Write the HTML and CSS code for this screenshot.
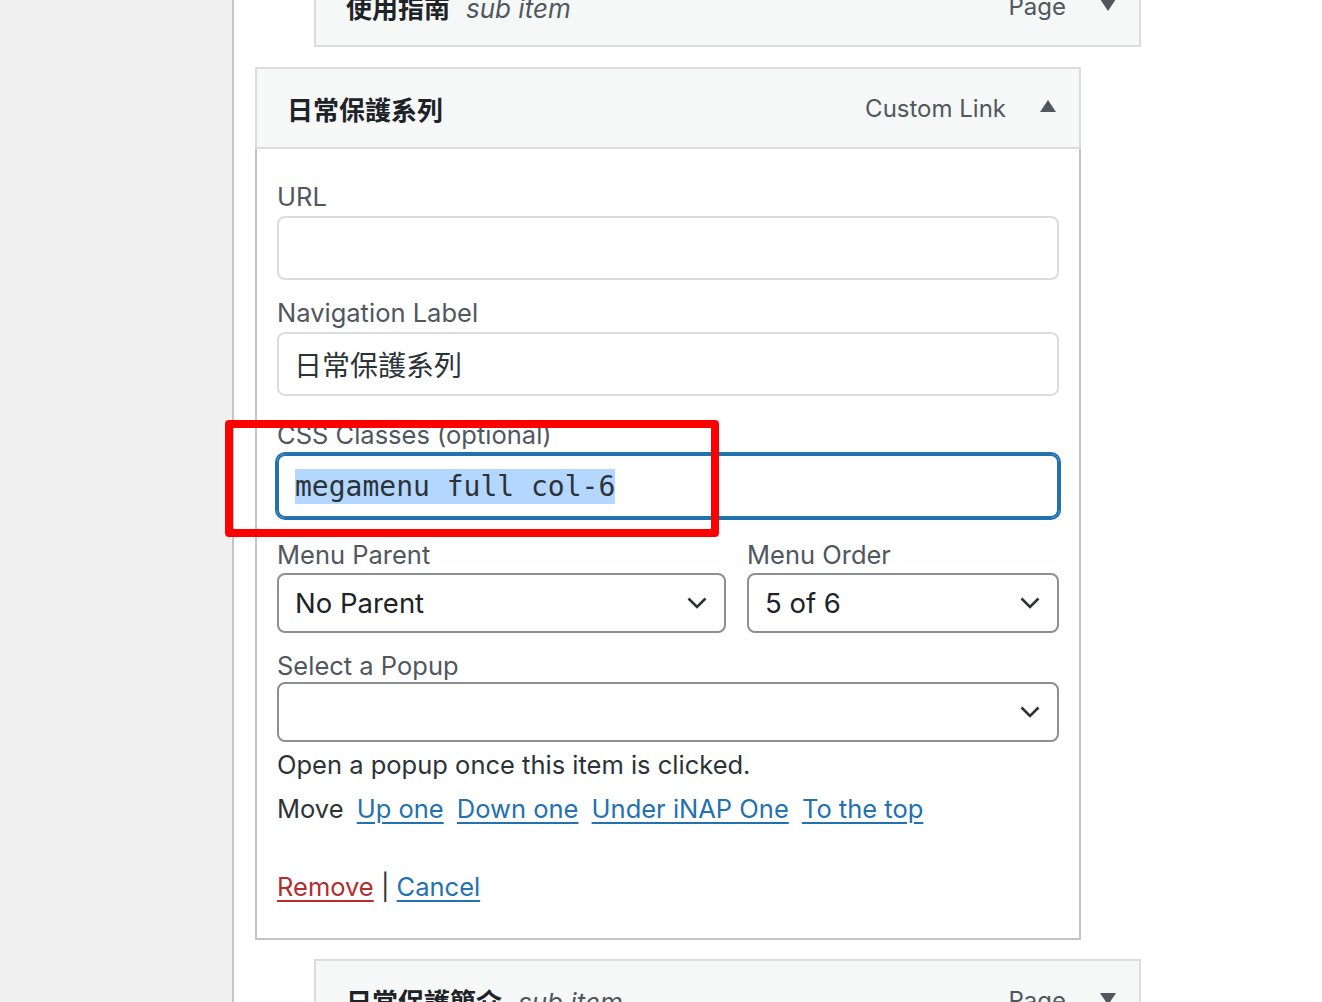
FILE: index.html
```html
<!DOCTYPE html>
<html>
    <head>
        <meta charset="utf-8">
        <title>Menus</title>
        <link rel="stylesheet" href="styles.css">
    </head>
    <body>
        <div class="screen">
            <aside class="sidebar"></aside>
            <main class="menu-edit">
                <ul class="menu-items">
                    <li class="menu-item depth-1 first">
                        <div class="item-bar">
                            <span class="item-title"><b>使用指南</b><i>sub item</i></span>
                            <span class="item-controls">
                                <span class="item-type">Page</span>
                                <span class="toggle down"></span>
                            </span>
                        </div>
                    </li>

                    <li class="menu-item depth-0 open">
                        <div class="item-bar">
                            <span class="item-title"><b>日常保護系列</b></span>
                            <span class="item-controls">
                                <span class="item-type">Custom Link</span>
                                <span class="toggle up"></span>
                            </span>
                        </div>
                        <div class="item-settings">
                            <div class="field field-url">
                                <label>URL</label>
                                <div class="input"></div>
                            </div>
                            <div class="field field-title">
                                <label>Navigation Label</label>
                                <div class="input">日常保護系列</div>
                            </div>
                            <div class="field field-css">
                                <label>CSS Classes (optional)</label>
                                <div class="input focused"><span class="selected">megamenu full col-6</span></div>
                                <div class="annotation"></div>
                            </div>
                            <div class="field-row">
                                <div class="field field-parent">
                                    <label>Menu Parent</label>
                                    <div class="select">No Parent<svg viewBox="0 0 20 12"><polyline points="1.5,1.5 10,10 18.5,1.5"/></svg></div>
                                </div>
                                <div class="field field-order">
                                    <label>Menu Order</label>
                                    <div class="select">5 of 6<svg viewBox="0 0 20 12"><polyline points="1.5,1.5 10,10 18.5,1.5"/></svg></div>
                                </div>
                            </div>
                            <div class="field field-popup">
                                <label>Select a Popup</label>
                                <div class="select"><span></span><svg viewBox="0 0 20 12"><polyline points="1.5,1.5 10,10 18.5,1.5"/></svg></div>
                            </div>
                            <p class="description">Open a popup once this item is clicked.</p>
                            <p class="move">Move <a href="#">Up one</a> <a href="#">Down one</a> <a href="#">Under iNAP One</a> <a href="#">To the top</a></p>
                            <p class="actions"><a href="#" class="remove">Remove</a> | <a href="#">Cancel</a></p>
                        </div>
                    </li>

                    <li class="menu-item depth-1">
                        <div class="item-bar">
                            <span class="item-title"><b>日常保護簡介</b><i>sub item</i></span>
                            <span class="item-controls">
                                <span class="item-type">Page</span>
                                <span class="toggle down"></span>
                            </span>
                        </div>
                    </li>
                </ul>
            </main>
        </div>
    </body>
</html>
```

FILE: styles.css
```css
body {
    margin: 0;
    font-family: "Inter", "Noto Sans CJK TC", sans-serif;
    font-size: 25.5px;
    color: #2c3338;
    background-color: #fff;
}

.screen {
    display: flex;
    height: 1002px;
    overflow: hidden;
}
.sidebar {
    width: 232px;
    flex-shrink: 0;
    background-color: #f0f0f1;
    border-right: 2px solid #c3c4c7;
}
.menu-edit {
    flex: 1;
}

ul.menu-items {
    list-style: none;
    margin: -35px 0 0;
    padding: 0;
}
li.menu-item {
    margin-bottom: 19px;
}
li.menu-item.first {
    margin-bottom: 20px;
}
li.depth-0 {
    margin-left: 21px;
    width: 826px;
}
li.depth-1 {
    margin-left: 80px;
    width: 827px;
}

.item-bar {
    display: flex;
    align-items: center;
    justify-content: space-between;
    height: 78px;
    padding: 0 23px 0 30px;
    background-color: #f6f7f7;
    border: 2px solid #dcdcde;
    font-size: 26px;
}
.item-title b {
    font-weight: 700;
    color: #1d2327;
}
.item-title i {
    margin-left: 16px;
    color: #50575e;
}
.item-controls {
    display: flex;
    align-items: center;
    color: #50575e;
    font-size: 24px;
}
.toggle {
    width: 0;
    height: 0;
    margin-left: 34px;
    border-left: 8px solid transparent;
    border-right: 8px solid transparent;
}
.toggle.up {
    border-bottom: 12px solid #50575e;
    margin-top: -4px;
}
.toggle.down {
    border-top: 12px solid #50575e;
    margin-top: -2px;
}

.item-settings {
    padding: 33px 20px 36px;
    border: 2px solid #c3c4c7;
    border-top: none;
}

.field label {
    display: block;
    line-height: 30px;
    color: #50575e;
    margin-bottom: 4px;
}
.field-title,
.field-popup {
    margin-top: 18px;
}
.field-css {
    position: relative;
    margin-top: 24px;
}
.field-row {
    display: grid;
    grid-template-columns: 449px 1fr;
    gap: 21px;
    margin-top: 22px;
}
.field-row label {
    margin-bottom: 3px;
}
.field-popup label {
    margin-bottom: 1px;
}

.input {
    box-sizing: border-box;
    height: 64px;
    padding: 0 15px;
    display: flex;
    align-items: center;
    border: 2px solid #dcdcde;
    border-radius: 8px;
    font-size: 28px;
    color: #2c3338;
}
.input.focused {
    padding-left: 16px;
    border-color: #2271b1;
    box-shadow: 0 0 0 2px #2271b1;
    font-family: "DejaVu Sans Mono", monospace;
}
.input .selected {
    line-height: 35px;
    background-color: #b4d7ff;
}

.select {
    box-sizing: border-box;
    height: 60px;
    padding: 0 17px 0 16px;
    display: flex;
    align-items: center;
    justify-content: space-between;
    border: 2px solid #8c8f94;
    border-radius: 8px;
    font-size: 27.5px;
    color: #1d2327;
}
.select svg {
    width: 20px;
    height: 12px;
    fill: none;
    stroke: #2c3338;
    stroke-width: 2.6;
}

.annotation {
    position: absolute;
    left: -52px;
    top: 0;
    width: 494px;
    height: 117px;
    box-sizing: border-box;
    border: 8px solid #ff0000;
    border-radius: 4px;
}

p {
    margin: 0;
    line-height: 30px;
}
p.description {
    margin-top: 8px;
}
p.move {
    margin-top: 14px;
}
p.move a {
    margin-left: 6px;
}
p.actions {
    margin-top: 48px;
}
a {
    color: #2271b1;
    text-decoration: underline;
    text-underline-offset: 4px;
}
a.remove {
    color: #b32d2e;
}
```
